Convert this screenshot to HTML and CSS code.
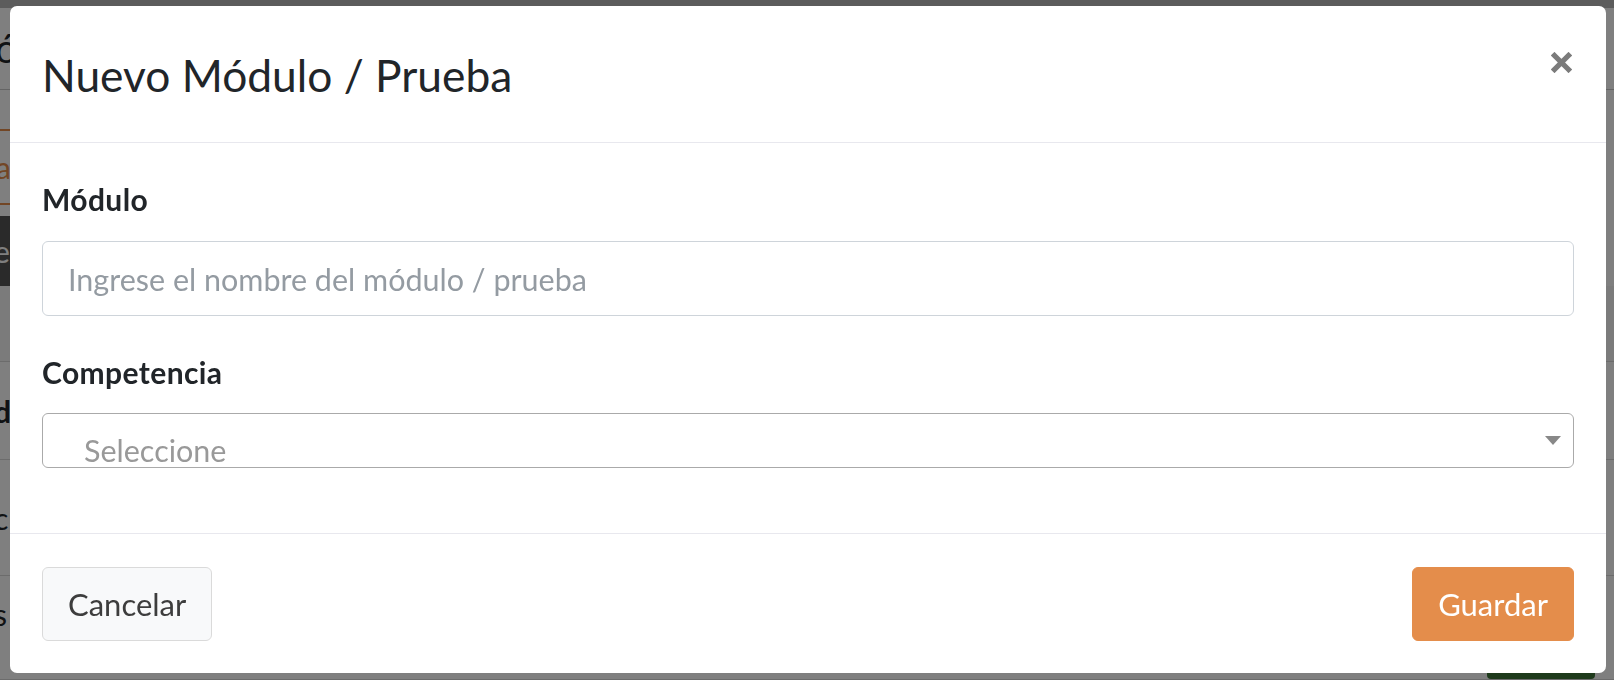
FILE: index.html
```html
<!DOCTYPE html>
<html lang="es">
<head>
<meta charset="utf-8">
<title>Nuevo Módulo / Prueba</title>
<link rel="stylesheet" href="styles.css">
</head>
<body>
<div class="page">
  <div class="page-top"></div>
  <div class="page-head"><span class="page-title">ódulos</span></div>
  <div class="page-tabs"><div class="tab">a</div></div>
  <div class="table-head"><span>e</span></div>
  <div class="table-row row-a"><span></span></div>
  <div class="table-row row-b"><span class="bold">d</span></div>
  <div class="table-row row-c"><span>c</span></div>
  <div class="table-row row-d"><span>s</span><span class="btn-green">Nuevo</span></div>
</div>
<div class="backdrop"></div>
<div class="modal">
  <div class="modal-header">
    <h4 class="modal-title">Nuevo Módulo / Prueba</h4>
    <button class="close" type="button" aria-label="Cerrar">
      <svg width="21" height="21" viewBox="0 0 21 21"><path d="M3.5 3.5 L17.5 17.5 M17.5 3.5 L3.5 17.5" stroke="#7b7b7b" stroke-width="5.2" stroke-linecap="square" fill="none"/></svg>
    </button>
  </div>
  <div class="modal-body">
    <label class="field-label first">Módulo</label>
    <input class="field-input" type="text" placeholder="Ingrese el nombre del módulo / prueba">
    <label class="field-label second">Competencia</label>
    <div class="field-select">
      <span class="select-text">Seleccione</span>
      <svg class="select-arrow" width="16" height="9" viewBox="0 0 16 9"><path d="M0 0 H16 L8 9 Z" fill="#888"/></svg>
    </div>
  </div>
  <div class="modal-footer">
    <button class="btn btn-light" type="button">Cancelar</button>
    <button class="btn btn-orange" type="button">Guardar</button>
  </div>
</div>
</body>
</html>
```
FILE: styles.css
```css
* { box-sizing: border-box; }
html, body { margin: 0; height: 100%; }
body {
  font-family: "Lato", "Noto Sans", sans-serif;
  background: #fff;
  overflow: hidden;
  color: #212529;
}

/* underlying page (only edges visible) */
.page { height: 100%; display: flex; flex-direction: column; }
.page-top { height: 8px; background: #b8b8b8; }
.page-head { height: 88px; border-bottom: 1px solid #c8c8c8; display: flex; align-items: center; font-size: 40px; }
.page-title { margin-left: -5px; }
.page-tabs { height: 131px; padding-top: 39px; }
.tab { width: 200px; height: 76px; border-top: 2px solid #e48d4b; border-bottom: 2px solid #e48d4b; color: #e48d4b; font-size: 30px; display: flex; align-items: center; margin-left: -4px; }
.table-head { height: 75px; display: flex; align-items: center; font-size: 30px; color: #fff; }
.table-head span { margin-left: -6px; background: #555; width: 120px; height: 100%; display: flex; align-items: center; }
.table-row { border-bottom: 1px solid #d8d8d8; font-size: 30px; display: flex; align-items: center; }
.table-row span { margin-left: -6px; }
.table-row .bold { font-weight: 700; }
.row-a { height: 81px; background: #f6f6f6; }
.row-b { height: 104px; }
.row-c { height: 123px; }
.row-d { flex: 1; align-items: flex-start; padding-top: 20px; }
.btn-green { margin-left: auto !important; margin-right: 19px; margin-top: 43px; width: 108px; height: 40px; background: #3c7436; color: #fff; font-size: 24px; text-align: center; border-radius: 4px; }

.backdrop { position: fixed; inset: 0; background: rgba(0, 0, 0, 0.5); }

/* modal */
.modal {
  position: fixed;
  left: 10px;
  top: 6px;
  width: 1596px;
  height: 667px;
  background: #fff;
  border-radius: 7px;
  display: flex;
  flex-direction: column;
}
.modal-header {
  height: 137px;
  flex: none;
  border-bottom: 1px solid #e8e8ee;
  display: flex;
  align-items: center;
  padding: 0 32px;
}
.modal-title {
  margin: 2px 0 0;
  font-weight: 400;
  font-size: 44.3px;
  line-height: 1.2;
  color: #212529;
}
.close {
  margin-left: auto;
  margin-right: 2px;
  align-self: flex-start;
  margin-top: 46px;
  padding: 0;
  border: 0;
  background: none;
  width: 21px;
  height: 21px;
  display: block;
}
.close svg { display: block; }

.modal-body {
  flex: 1;
  padding: 38px 32px 0;
  display: flex;
  flex-direction: column;
}
.field-label {
  display: block;
  font-weight: 700;
  font-size: 30px;
  line-height: 36px;
  letter-spacing: 0.4px;
  color: #212529;
}
.field-label.first { margin-bottom: 24px; }
.field-label.second { margin-top: 38px; margin-bottom: 23px; }
.field-input {
  display: block;
  width: 100%;
  height: 75px;
  flex: none;
  border: 1px solid #ced4da;
  border-radius: 6px;
  padding: 0 25px;
  font-family: inherit;
  font-size: 30.5px;
  color: #495057;
  outline: none;
}
.field-input::placeholder { color: #949ba2; }
.field-select {
  height: 55px;
  flex: none;
  border: 1px solid #aaa;
  border-radius: 6px;
  overflow: hidden;
  display: flex;
  align-items: flex-start;
}
.select-text {
  flex: 1;
  padding-left: 41px;
  padding-top: 19px;
  font-size: 30.5px;
  line-height: 34px;
  color: #999;
}
.select-arrow { margin-top: 22px; margin-right: 12px; flex: none; }

.modal-footer {
  flex: none;
  height: 140px;
  border-top: 1px solid #e8e8ee;
  padding: 33px 32px 32px;
  display: flex;
  justify-content: space-between;
  align-items: flex-start;
}
.btn {
  height: 74px;
  padding: 0 25px;
  border-radius: 6px;
  font-family: inherit;
  font-size: 31px;
  line-height: 1;
}
.btn-light { background: #f8f9fa; border: 1px solid #dadada; color: #3d3d3d; }
.btn-orange { background: #e48d4b; border: 1px solid #e48d4b; color: #fff; }
```
